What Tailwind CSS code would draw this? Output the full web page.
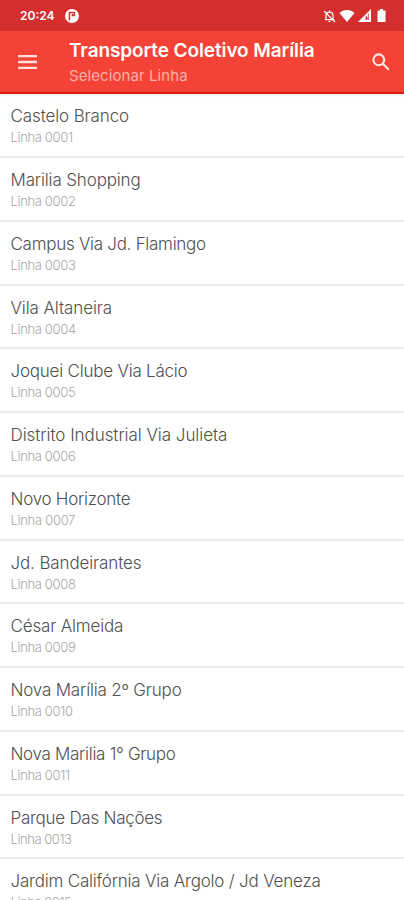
<!DOCTYPE html>
<html lang="pt-BR">
<head>
  <meta charset="UTF-8" />
  <meta name="viewport" content="width=device-width, initial-scale=1.0" />
  <title>Transporte Coletivo Marília</title>
  <!-- Tailwind CSS CDN -->
  <script src="https://cdn.jsdelivr.net/npm/@tailwindcss/browser@4"></script>
</head>
<body class="h-screen flex flex-col overflow-hidden bg-white font-['Inter',sans-serif]">

  <!-- Status bar -->
  <div class="h-[31px] shrink-0 flex items-center justify-between bg-[#d32f2f] pl-5 pr-[18px] text-white">
    <div class="flex items-center gap-[10px]">
      <span class="text-xs font-semibold">20:24</span>
      <svg class="size-[14px]" viewBox="0 0 14 14">
        <circle cx="7" cy="7" r="7" fill="#fff" />
        <path d="M4.4 11.5V3.6H9.4V6.6H7.4V5" fill="none" stroke="#d32f2f" stroke-width="1.5" />
      </svg>
    </div>
    <div class="flex items-center gap-[3px]">
      <svg class="w-[13px] h-[14px]" viewBox="0 0 13 14" fill="none" stroke="#fff" stroke-width="1.2">
        <path d="M3 10.5V6.5C3 4.5 4.3 3.2 6.5 3.2S10 4.5 10 6.5V10.5M1.8 10.7H11.2M6.5 1.5V3M5.5 12.5H7.5M1 2L12 13" />
      </svg>
      <svg class="w-4 h-3" viewBox="0 0 16 12">
        <path d="M8 12L0.5 3C2.5 1 5 0 8 0S13.5 1 15.5 3Z" fill="#fff" />
      </svg>
      <svg class="size-[13px]" viewBox="0 0 13 13">
        <path d="M13 0V13H0Z" fill="#fff" />
        <path d="M11 4.5L7.5 8V11H11Z" fill="#d32f2f" />
        <path d="M9.8 6V9M9.8 10V11.2" stroke="#fff" stroke-width="1.2" />
      </svg>
      <svg class="w-[9px] h-[13px] ml-[3px]" viewBox="0 0 9 13">
        <path d="M3 0H6V1.5H8.5V13H0.5V1.5H3Z" fill="#fff" />
      </svg>
    </div>
  </div>

  <!-- App bar -->
  <header class="h-[63px] shrink-0 flex items-center bg-[#f44336] border-b-2 border-[#dc1a14] pl-[18px] pr-[14px] text-white">
    <svg class="w-[19px] h-[14px] shrink-0" viewBox="0 0 19 14">
      <path d="M0 1.2H19M0 7H19M0 12.8H19" stroke="#ffe0dc" stroke-width="2.3" />
    </svg>
    <div class="ml-8 pt-[3px] grow whitespace-nowrap">
      <h1 class="text-[19px] leading-[26px] font-semibold tracking-[-0.1px]">Transporte Coletivo Marília</h1>
      <p class="text-[15px] leading-6 tracking-[0.08px] text-[#ffb0a8]">Selecionar Linha</p>
    </div>
    <svg class="size-[18px] shrink-0" viewBox="0 0 18 18" fill="none" stroke="#ffe9e6" stroke-width="2.1">
      <circle cx="6.8" cy="6.8" r="5.4" />
      <path d="M10.8 10.8L16.8 16.8" />
    </svg>
  </header>
  <div class="h-[3px] shrink-0 bg-linear-to-b from-[#eceeee] to-white"></div>

  <!-- Linhas -->
  <ul class="shrink-0 whitespace-nowrap text-[17px] leading-6 font-light text-[#505050]">
    <li class="h-[61px] border-b-2 border-[#ececec] pl-[10.5px] pt-[7px]"><p class="tracking-[-0.12px]">Castelo Branco</p><p class="text-[13px] leading-[19px] tracking-[-0.35px] text-[#a8a8a8]">Linha 0001</p></li>
    <li class="h-[63.75px] border-b-2 border-[#ececec] pl-[10.5px] pt-[10px]"><p class="tracking-[-0.15px]">Marilia Shopping</p><p class="text-[13px] leading-[19px] tracking-[-0.35px] text-[#a8a8a8]">Linha 0002</p></li>
    <li class="h-[63.75px] border-b-2 border-[#ececec] pl-[10.5px] pt-[10px]"><p class="tracking-[-0.28px]">Campus Via Jd. Flamingo</p><p class="text-[13px] leading-[19px] tracking-[-0.35px] text-[#a8a8a8]">Linha 0003</p></li>
    <li class="h-[63.75px] border-b-2 border-[#ececec] pl-[10.5px] pt-[10px]"><p class="tracking-[-0.1px]">Vila Altaneira</p><p class="text-[13px] leading-[19px] tracking-[-0.35px] text-[#a8a8a8]">Linha 0004</p></li>
    <li class="h-[63.75px] border-b-2 border-[#ececec] pl-[10.5px] pt-[10px]"><p class="tracking-[-0.22px]">Joquei Clube Via Lácio</p><p class="text-[13px] leading-[19px] tracking-[-0.35px] text-[#a8a8a8]">Linha 0005</p></li>
    <li class="h-[63.75px] border-b-2 border-[#ececec] pl-[10.5px] pt-[10px]"><p class="tracking-[-0.05px]">Distrito Industrial Via Julieta</p><p class="text-[13px] leading-[19px] tracking-[-0.35px] text-[#a8a8a8]">Linha 0006</p></li>
    <li class="h-[63.75px] border-b-2 border-[#ececec] pl-[10.5px] pt-[10px]"><p class="tracking-[-0.26px]">Novo Horizonte</p><p class="text-[13px] leading-[19px] tracking-[-0.3px] text-[#a8a8a8]">Linha 0007</p></li>
    <li class="h-[63.75px] border-b-2 border-[#ececec] pl-[10.5px] pt-[10px]"><p class="tracking-[-0.13px]">Jd. Bandeirantes</p><p class="text-[13px] leading-[19px] tracking-[-0.35px] text-[#a8a8a8]">Linha 0008</p></li>
    <li class="h-[63.75px] border-b-2 border-[#ececec] pl-[10.5px] pt-[10px]"><p class="tracking-[-0.16px]">César Almeida</p><p class="text-[13px] leading-[19px] tracking-[-0.35px] text-[#a8a8a8]">Linha 0009</p></li>
    <li class="h-[63.75px] border-b-2 border-[#ececec] pl-[10.5px] pt-[10px]"><p class="tracking-[-0.17px]">Nova Marília 2º Grupo</p><p class="text-[13px] leading-[19px] tracking-[-0.35px] text-[#a8a8a8]">Linha 0010</p></li>
    <li class="h-[63.75px] border-b-2 border-[#ececec] pl-[10.5px] pt-[10px]"><p class="tracking-[-0.3px]">Nova Marilia 1° Grupo</p><p class="text-[13px] leading-[19px] tracking-[-0.35px] text-[#a8a8a8]">Linha 0011</p></li>
    <li class="h-[63.75px] border-b-2 border-[#ececec] pl-[10.5px] pt-[10px]"><p class="tracking-[-0.26px]">Parque Das Nações</p><p class="text-[13px] leading-[19px] tracking-[-0.45px] text-[#a8a8a8]">Linha 0013</p></li>
    <li class="h-[63.75px] pl-[10.5px] pt-[10px]"><p class="tracking-[-0.2px]">Jardim Califórnia Via Argolo / Jd Veneza</p><p class="text-[13px] leading-[19px] tracking-[-0.45px] text-[#a8a8a8]">Linha 0015</p></li>
  </ul>

</body>
</html>
